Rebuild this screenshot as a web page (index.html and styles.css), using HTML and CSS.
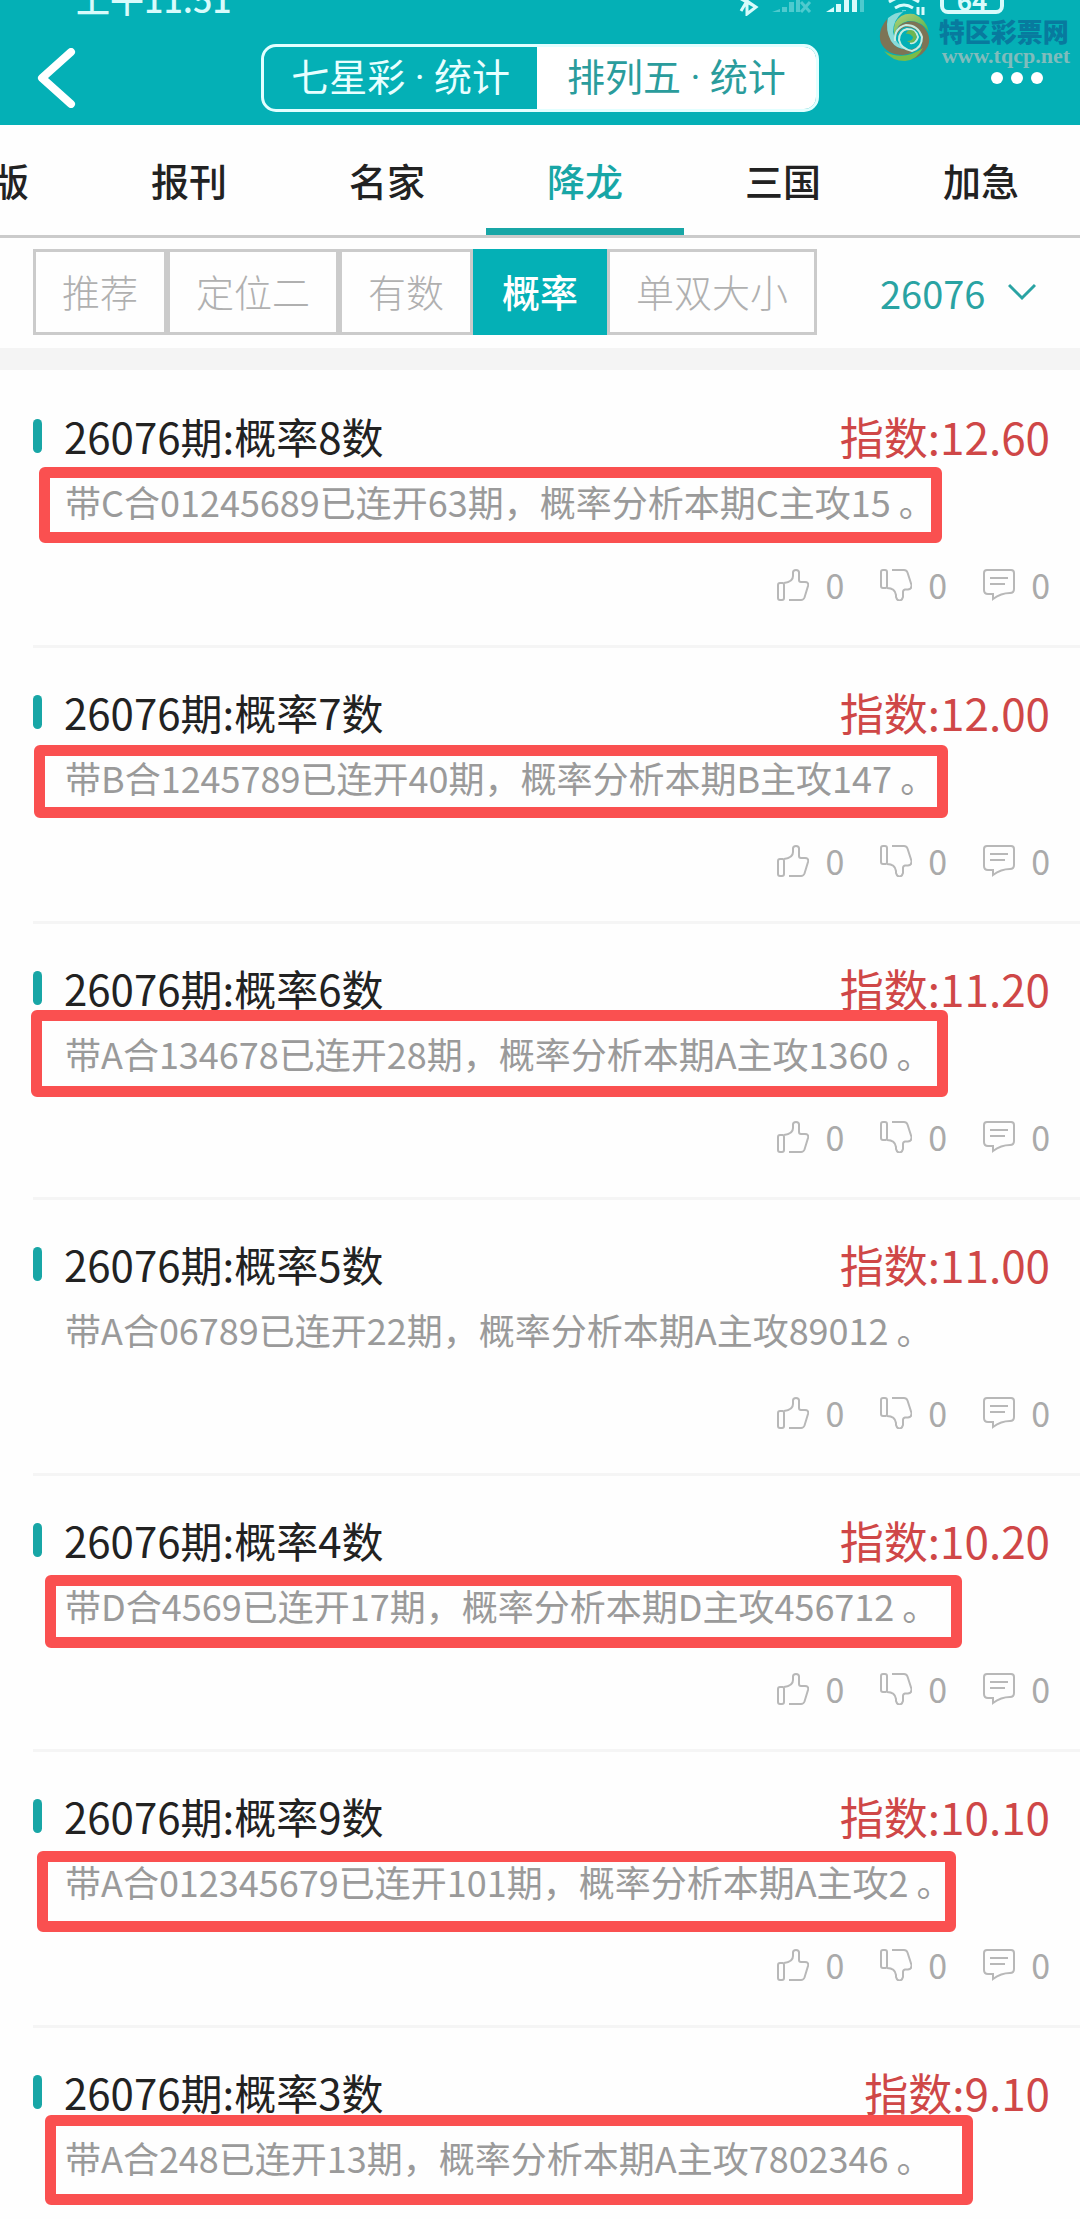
FILE: index.html
```html
<!DOCTYPE html>
<html lang="zh-CN">
<head>
<meta charset="utf-8">
<meta name="viewport" content="width=device-width, initial-scale=1">
<title>排列五 · 统计</title>
<link rel="stylesheet" href="styles.css">
</head>
<body>
<svg class="sprite" aria-hidden="true">
  <symbol id="up" viewBox="0 0 32 32"><path d="M3 14H5.500Q7 14 7 16V29Q7 31 5 31H3Q1 31 1 29V16Q1 14 3 14ZM7 14Q16 13 16 7V3.500Q16 1 19 1T22 3.500V11Q22 13 24 13H28Q32 13 31 17L27.500 28.500Q26.500 31 24 31H12"/></symbol>
  <symbol id="down" viewBox="0 0 32 32"><path d="M3 1H5Q7 1 7 3V17Q7 19 5.500 19H3Q1 19 1 17V3Q1 1 3 1ZM12 1H24Q26.500 1 27.500 3.500L31.500 16Q32 20 28 20.500H25Q23 21 23 23V28Q22 31.500 19.500 31.500T16 28V26Q15 19 7 19"/></symbol>
  <symbol id="talk" viewBox="0 0 32 32"><path d="M4 1H28Q31 1 31 4V20Q31 24 27 24Q18 24 10 30V25H5Q1 25 1 21V4Q1 1 4 1ZM7 9H25M7 15H22"/></symbol>
</svg>

<header class="header">
  <div class="status">
    <span class="clock">上午11:51</span>
    <svg class="signals" viewBox="0 0 190 17" aria-hidden="true">
      <path class="line" d="M3 0L18 8M9 -4V15L18 8L9 2L3 12"/>
      <g class="faint"><path d="M34 13L42 10V13ZM44 8h5v5h-5zM51 3h5v10h-5zM58 -2h4v15h-4z"/><path class="line" d="M63 3L72 13M72 3L63 13"/></g>
      <path class="solid" d="M88 13L96 8V13ZM98 5h5v8h-5zM106 1h5v12h-5zM114 -4h5v17h-5z"/>
      <path class="faint" d="M122 -4h4v17h-4z"/>
      <path class="line" d="M151 3Q166 -7 181 3M157 9Q166 3 175 9M164 13h4M180 8v8M185 8v8"/>
    </svg>
    <span class="battery">64</span>
  </div>
  <nav class="navbar">
    <button class="icon-button" type="button" aria-label="返回">
      <svg width="40" height="60" viewBox="0 0 40 60"><path class="back" d="M35 4L6 30L35 56"/></svg>
    </button>
    <div class="segments">
      <button class="segment" type="button">七星彩 · 统计</button>
      <button class="segment segment-on" type="button">排列五 · 统计</button>
    </div>
    <button class="icon-button icon-button-end" type="button" aria-label="更多">
      <svg width="54" height="14" viewBox="0 0 54 14"><circle cx="7" cy="7" r="6"/><circle cx="27" cy="7" r="6"/><circle cx="47" cy="7" r="6"/></svg>
    </button>
  </nav>
  <div class="watermark">
    <svg width="52" height="52" viewBox="0 0 52 52" aria-hidden="true">
      <defs>
        <linearGradient id="rim" x1="0" y1="0" x2="1" y2="1"><stop offset="0" stop-color="#a8c878"/><stop offset=".45" stop-color="#79806a"/><stop offset="1" stop-color="#2f9a58"/></linearGradient>
        <linearGradient id="leaf" x1="0" y1="0" x2="1" y2="1"><stop offset="0" stop-color="#b4d078"/><stop offset="1" stop-color="#4fb24a"/></linearGradient>
      </defs>
      <circle cx="26" cy="26" r="25" fill="#04b0b6"/>
      <path fill="#7d7455" d="M8 9Q-2 21 2 33Q8 45 24 45Q38 43 43 34Q32 43 20 38Q8 32 8 9Z"/>
      <path fill="#8adbd8" d="M9 8Q16 2 24 2Q14 10 14 22Q16 35 29 39Q18 40 12 31Q6 20 9 8Z"/>
      <path fill="url(#leaf)" d="M16 13Q22 2 35 4Q47 9 50 22Q42 10 29 11Q19 13 15 25Q14 19 16 13Z"/>
      <path fill="#7d7455" d="M21 15Q33 7 44 16Q53 26 49 36Q45 45 34 49Q45 39 43 28Q38 16 26 17Q19 20 17 27Q17 19 21 15Z"/>
      <path fill="none" stroke="#c6ece2" stroke-width="2" d="M16 31Q15 18 27 15Q39 15 43 27Q43 38 33 41Q22 39 20 30Q20 21 28 19Q37 19 39 27Q37 34 31 33"/>
      <path fill="#6fb552" d="M27 24Q29 18 35 21Q40 27 35 32Q31 34 28 31Q34 31 34 27Q31 23 27 24Z"/>
      <path fill="#79bd47" d="M5 41Q24 52 44 38Q38 50 26 51Q13 51 5 41Z"/>
    </svg>
    <div class="watermark-text"><strong>特区彩票网</strong><span>www.tqcp.net</span></div>
  </div>
</header>

<nav class="tabs">
  <a class="tab" href="#new">新版</a>
  <a class="tab" href="#press">报刊</a>
  <a class="tab" href="#experts">名家</a>
  <a class="tab tab-on" href="#xianglong">降龙</a>
  <a class="tab" href="#sanguo">三国</a>
  <a class="tab" href="#urgent">加急</a>
</nav>

<section class="filters">
  <div class="chips">
    <button class="chip" type="button">推荐</button>
    <button class="chip" type="button">定位二</button>
    <button class="chip" type="button">有数</button>
    <button class="chip chip-on" type="button">概率</button>
    <button class="chip" type="button">单双大小</button>
  </div>
  <label class="issue">
    <select aria-label="期号"><option>26076</option></select>
    <svg width="28" height="18" viewBox="0 0 28 18" aria-hidden="true"><path d="M1 2L14 15L27 2"/></svg>
  </label>
</section>

<main class="list">
  <article class="item">
    <div class="item-head"><h2>26076期:概率8数</h2><span class="index">指数:12.60</span></div>
    <p>带C合01245689已连开63期，概率分析本期C主攻15 。</p>
    <div class="actions">
      <button type="button" aria-label="赞"><svg><use href="#up"/></svg>0</button>
      <button type="button" aria-label="踩"><svg><use href="#down"/></svg>0</button>
      <button type="button" aria-label="评论"><svg><use href="#talk"/></svg>0</button>
    </div>
    <span class="mark mark-8"></span>
  </article>
  <article class="item">
    <div class="item-head"><h2>26076期:概率7数</h2><span class="index">指数:12.00</span></div>
    <p>带B合1245789已连开40期，概率分析本期B主攻147 。</p>
    <div class="actions">
      <button type="button" aria-label="赞"><svg><use href="#up"/></svg>0</button>
      <button type="button" aria-label="踩"><svg><use href="#down"/></svg>0</button>
      <button type="button" aria-label="评论"><svg><use href="#talk"/></svg>0</button>
    </div>
    <span class="mark mark-7"></span>
  </article>
  <article class="item">
    <div class="item-head"><h2>26076期:概率6数</h2><span class="index">指数:11.20</span></div>
    <p>带A合134678已连开28期，概率分析本期A主攻1360 。</p>
    <div class="actions">
      <button type="button" aria-label="赞"><svg><use href="#up"/></svg>0</button>
      <button type="button" aria-label="踩"><svg><use href="#down"/></svg>0</button>
      <button type="button" aria-label="评论"><svg><use href="#talk"/></svg>0</button>
    </div>
    <span class="mark mark-6"></span>
  </article>
  <article class="item">
    <div class="item-head"><h2>26076期:概率5数</h2><span class="index">指数:11.00</span></div>
    <p>带A合06789已连开22期，概率分析本期A主攻89012 。</p>
    <div class="actions">
      <button type="button" aria-label="赞"><svg><use href="#up"/></svg>0</button>
      <button type="button" aria-label="踩"><svg><use href="#down"/></svg>0</button>
      <button type="button" aria-label="评论"><svg><use href="#talk"/></svg>0</button>
    </div>
  </article>
  <article class="item">
    <div class="item-head"><h2>26076期:概率4数</h2><span class="index">指数:10.20</span></div>
    <p>带D合4569已连开17期，概率分析本期D主攻456712 。</p>
    <div class="actions">
      <button type="button" aria-label="赞"><svg><use href="#up"/></svg>0</button>
      <button type="button" aria-label="踩"><svg><use href="#down"/></svg>0</button>
      <button type="button" aria-label="评论"><svg><use href="#talk"/></svg>0</button>
    </div>
    <span class="mark mark-4"></span>
  </article>
  <article class="item">
    <div class="item-head"><h2>26076期:概率9数</h2><span class="index">指数:10.10</span></div>
    <p>带A合012345679已连开101期，概率分析本期A主攻2 。</p>
    <div class="actions">
      <button type="button" aria-label="赞"><svg><use href="#up"/></svg>0</button>
      <button type="button" aria-label="踩"><svg><use href="#down"/></svg>0</button>
      <button type="button" aria-label="评论"><svg><use href="#talk"/></svg>0</button>
    </div>
    <span class="mark mark-9"></span>
  </article>
  <article class="item">
    <div class="item-head"><h2>26076期:概率3数</h2><span class="index">指数:9.10</span></div>
    <p>带A合248已连开13期，概率分析本期A主攻7802346 。</p>
    <span class="mark mark-3"></span>
  </article>
</main>
</body>
</html>
```
FILE: styles.css
```css
:root {
  --teal: #04b0b6;
  --teal-dark: #18a6a6;
  --line: #cbcbcb;
}

* { box-sizing: border-box; }

body {
  margin: 0;
  background: #fefefe;
  color: #222;
  font-family: "Noto Sans CJK SC", sans-serif;
  font-size: 38px;
}

button, select {
  margin: 0;
  padding: 0;
  border: 0;
  background: none;
  color: inherit;
  font: inherit;
}

.sprite { display: none; }

/* Header */
.header {
  position: relative;
  background: var(--teal);
  color: #fff;
}

.status {
  display: flex;
  align-items: flex-end;
  height: 16px;
  padding: 0 76px;
  overflow: hidden;
  color: #d8fbfb;
}

.clock {
  flex: 1;
  font-size: 34px;
  font-weight: 500;
  line-height: 34px;
}

.signals {
  width: 190px;
  height: 17px;
  margin-right: 12px;
}
.signals .line { fill: none; stroke: #d8fbfb; stroke-width: 3; }
.signals .solid { fill: #d8fbfb; }
.signals .faint { fill: #d8fbfb; opacity: 0.35; }

.battery {
  width: 64px;
  height: 32px;
  margin-bottom: 2px;
  border: 4px solid #d8fbfb;
  border-radius: 8px;
  font-size: 26px;
  font-weight: 700;
  line-height: 28px;
  text-align: center;
}

.navbar {
  display: grid;
  grid-template-columns: 1fr auto 1fr;
  align-items: center;
  padding: 28px 36px 13px;
}

.icon-button { justify-self: start; display: flex; }
.icon-button-end { justify-self: end; }
.icon-button circle { fill: #fff; }
.back {
  fill: none;
  stroke: #fff;
  stroke-width: 8;
  stroke-linecap: round;
  stroke-linejoin: round;
}

.segments {
  display: flex;
  height: 68px;
  border: 3px solid #e2ffff;
  border-radius: 15px;
  overflow: hidden;
}
.segment {
  padding: 0 27px;
  color: #e8ffff;
  font-family: Roboto, "Noto Sans CJK SC", sans-serif;
  line-height: 62px;
}
.segment-on {
  padding: 0 30px;
  background: #fff;
  color: #2a9c9c;
}

.watermark {
  position: absolute;
  top: 10px;
  right: 10px;
  display: flex;
  gap: 8px;
}
.watermark-text {
  display: flex;
  flex-direction: column;
  padding-top: 8px;
  line-height: 25px;
}
.watermark-text strong {
  color: #087a9e;
  font-size: 26px;
  font-weight: 900;
}
.watermark-text span {
  padding-left: 3px;
  color: #80bcbc;
  font-family: "Liberation Serif", serif;
  font-size: 22px;
  font-weight: 700;
}

/* Tabs */
.tabs {
  display: flex;
  justify-content: flex-end;
  overflow: hidden;
  border-bottom: 3px solid var(--line);
}
.tab {
  flex: 0 0 198px;
  height: 110px;
  border-bottom: 7px solid transparent;
  color: #222;
  font-weight: 500;
  line-height: 110px;
  text-align: center;
  text-decoration: none;
}
.tab-on {
  border-color: var(--teal-dark);
  color: var(--teal-dark);
}

/* Filters */
.filters {
  display: flex;
  justify-content: space-between;
  align-items: center;
  padding: 11px 44px 13px 33px;
  border-bottom: 22px solid #f4f4f4;
}
.chips { display: flex; }
.chip {
  height: 86px;
  padding: 0 26px 3px;
  border: 3px solid var(--line);
  color: #b0b0b0;
  font-weight: 300;
}
.chip-on {
  border-color: var(--teal);
  background: var(--teal);
  color: #fff;
  font-weight: 500;
}
.issue {
  display: flex;
  align-items: center;
  gap: 22px;
  color: #2aa3a3;
}
.issue select { appearance: none; }
.issue path { fill: none; stroke: #2aa3a3; stroke-width: 3; }

/* List */
.list { padding: 2px 0 0 33px; }

.item {
  position: relative;
  padding: 34px 30px 30px 0;
  border-bottom: 3px solid #f5f5f5;
}
.item:last-child {
  padding-bottom: 0;
  border-bottom: 0;
}

.item-head {
  display: flex;
  align-items: center;
  height: 60px;
}
.item-head::before {
  content: "";
  width: 9px;
  height: 34px;
  margin-right: 22px;
  border-radius: 5px;
  background: var(--teal-dark);
}
.item h2 {
  flex: 1;
  margin: 0;
  padding-bottom: 2px;
  font-size: 42px;
  font-weight: 400;
}
.index {
  color: #cf4747;
  font-size: 44px;
}
.item p {
  margin: 5px 0 24px 32px;
  color: #9a9a9a;
  font-size: 36px;
  line-height: 60px;
}

.actions {
  display: flex;
  justify-content: flex-end;
  gap: 36px;
  height: 60px;
}
.actions button {
  display: flex;
  align-items: center;
  gap: 16px;
  color: #aaa;
  font-size: 34px;
  line-height: 56px;
}
.actions svg {
  width: 32px;
  height: 32px;
  fill: none;
  stroke: #b8b8b8;
  stroke-width: 2;
}

/* Hand-drawn frames over the tips */
.mark {
  position: absolute;
  border: 11px solid #fa5050;
  border-radius: 6px;
}
.mark-8 { top: 95px; left: 6px; width: 903px; height: 76px; }
.mark-7 { top: 97px; left: 1px; width: 914px; height: 73px; }
.mark-6 { top: 86px; left: -2px; width: 917px; height: 87px; }
.mark-4 { top: 99px; left: 12px; width: 917px; height: 73px; }
.mark-9 { top: 99px; left: 4px; width: 919px; height: 81px; }
.mark-3 { top: 87px; left: 12px; width: 928px; height: 90px; }
```
